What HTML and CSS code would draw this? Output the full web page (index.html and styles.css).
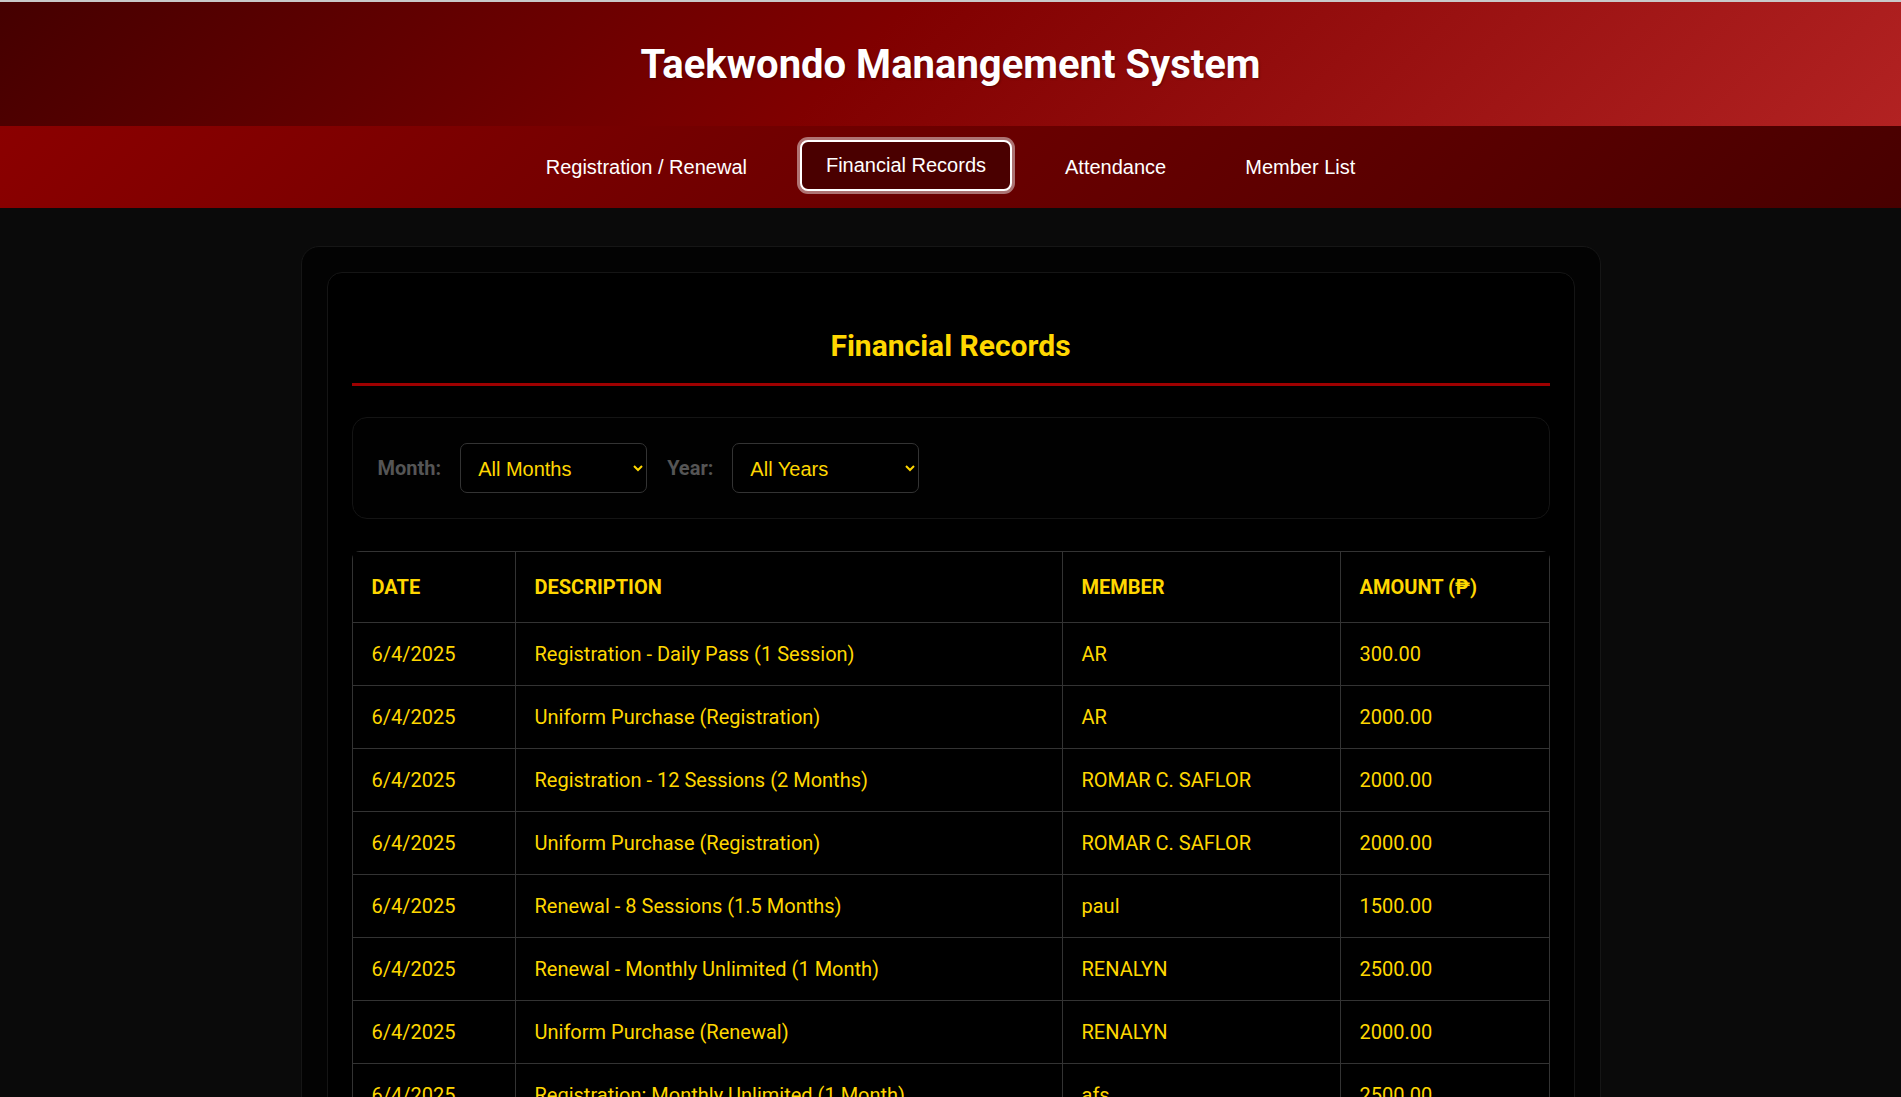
FILE: index.html
```html
<!DOCTYPE html>
<html lang="en">
<head>
<meta charset="utf-8">
<title>Taekwondo Manangement System</title>
<link rel="stylesheet" href="styles.css">
</head>
<body>
<header class="site-header">
  <h1 class="site-title">Taekwondo Manangement System</h1>
</header>
<nav class="main-nav">
  <a class="nav-link" href="#">Registration / Renewal</a>
  <a class="nav-link active" href="#">Financial Records</a>
  <a class="nav-link" href="#">Attendance</a>
  <a class="nav-link" href="#">Member List</a>
</nav>
<main class="container">
  <section class="card">
    <h2 class="card-title">Financial Records</h2>
    <div class="filters">
      <label class="filter-label" for="month">Month:</label>
      <select class="filter-select" id="month">
        <option>All Months</option>
        <option>January</option>
        <option>February</option>
      </select>
      <label class="filter-label" for="year">Year:</label>
      <select class="filter-select" id="year">
        <option>All Years</option>
        <option>2025</option>
      </select>
    </div>
    <div class="table-wrap">
      <table class="records">
        <thead>
          <tr>
            <th class="col-date">Date</th>
            <th class="col-desc">Description</th>
            <th class="col-member">Member</th>
            <th class="col-amount">Amount (₱)</th>
          </tr>
        </thead>
        <tbody>
          <tr><td>6/4/2025</td><td>Registration - Daily Pass (1 Session)</td><td>AR</td><td>300.00</td></tr>
          <tr><td>6/4/2025</td><td>Uniform Purchase (Registration)</td><td>AR</td><td>2000.00</td></tr>
          <tr><td>6/4/2025</td><td>Registration - 12 Sessions (2 Months)</td><td>ROMAR C. SAFLOR</td><td>2000.00</td></tr>
          <tr><td>6/4/2025</td><td>Uniform Purchase (Registration)</td><td>ROMAR C. SAFLOR</td><td>2000.00</td></tr>
          <tr><td>6/4/2025</td><td>Renewal - 8 Sessions (1.5 Months)</td><td>paul</td><td>1500.00</td></tr>
          <tr><td>6/4/2025</td><td>Renewal - Monthly Unlimited (1 Month)</td><td>RENALYN</td><td>2500.00</td></tr>
          <tr><td>6/4/2025</td><td>Uniform Purchase (Renewal)</td><td>RENALYN</td><td>2000.00</td></tr>
          <tr><td>6/4/2025</td><td>Registration: Monthly Unlimited (1 Month)</td><td>afs</td><td>2500.00</td></tr>
          <tr><td>6/4/2025</td><td>Uniform Purchase (Registration)</td><td>afs</td><td>2000.00</td></tr>
        </tbody>
      </table>
    </div>
  </section>
</main>
</body>
</html>
```
FILE: styles.css
```css
* { box-sizing: border-box; }

body {
  margin: 0;
  background: #0a0a0a;
  font-family: Roboto, "Liberation Sans", Arial, sans-serif;
  color: #ffd700;
}

.site-header {
  border-top: 2px solid #c9c9c9;
  padding: 39px 0 38px;
  background: linear-gradient(135deg, #450000 0%, #800000 45%, #b22222 100%);
  text-align: center;
}

.site-title {
  margin: 0;
  font-family: Roboto, sans-serif;
  font-weight: 700;
  font-size: 40px;
  line-height: 47px;
  color: #ffffff;
  text-shadow: 1px 1px 2px rgba(0, 0, 0, 0.35);
}

.main-nav {
  display: flex;
  justify-content: center;
  gap: 27px;
  padding: 16px 0 15px;
  background: linear-gradient(135deg, #8b0000 0%, #6a0000 50%, #480000 100%);
}

.nav-link {
  display: block;
  padding: 12px 24px;
  border: 2px solid transparent;
  border-radius: 8px;
  font-family: "Liberation Sans", Arial, sans-serif;
  font-size: 20px;
  line-height: 23px;
  color: #ffffff;
  text-decoration: none;
}

.nav-link.active {
  background: #4a0000;
  border-color: #ffffff;
  box-shadow: 0 0 0 3px rgba(255, 255, 255, 0.45);
  transform: translateY(-2px);
}

.container {
  max-width: 1300px;
  margin: 38px auto 0;
  padding: 25px;
  background: #030303;
  border: 1px solid #161616;
  border-radius: 18px;
}

.card {
  padding: 24px;
  background: #000000;
  border: 1px solid #151515;
  border-radius: 15px;
}

.card-title {
  margin: 31px 0 31px;
  padding-bottom: 20px;
  border-bottom: 3px solid #9e0000;
  font-family: Roboto, sans-serif;
  font-weight: 700;
  font-size: 30px;
  line-height: 35px;
  text-align: center;
  color: #ffd700;
}

.filters {
  display: flex;
  align-items: center;
  padding: 25px;
  border: 1px solid #141414;
  border-radius: 15px;
  background: #010101;
}

.filter-label {
  margin-right: 19px;
  font-family: Roboto, sans-serif;
  font-weight: 700;
  font-size: 20px;
  color: #555555;
}

.filter-select {
  width: 187px;
  height: 50px;
  margin-right: 20px;
  padding: 2px 8px 0 13px;
  background: #000000;
  border: 1px solid #333333;
  border-radius: 7px;
  font-family: "Liberation Sans", Arial, sans-serif;
  font-size: 20px;
  color: #ffd700;
}

.table-wrap {
  margin-top: 32px;
  border-radius: 8px;
  overflow: hidden;
}

.records {
  width: 100%;
  border-collapse: collapse;
  table-layout: fixed;
  font-family: Roboto, sans-serif;
  font-size: 20px;
  line-height: 23px;
}

.records th,
.records td {
  border: 1px solid #333333;
  text-align: left;
  color: #ffd700;
}

.records th {
  padding: 23.5px 19px;
  font-weight: 700;
  text-transform: uppercase;
}

.records td {
  padding: 19.5px 19px;
  font-weight: 400;
}

.col-date { width: 163px; }
.col-desc { width: 547px; }
.col-member { width: 278px; }
.col-amount { width: auto; }
```
